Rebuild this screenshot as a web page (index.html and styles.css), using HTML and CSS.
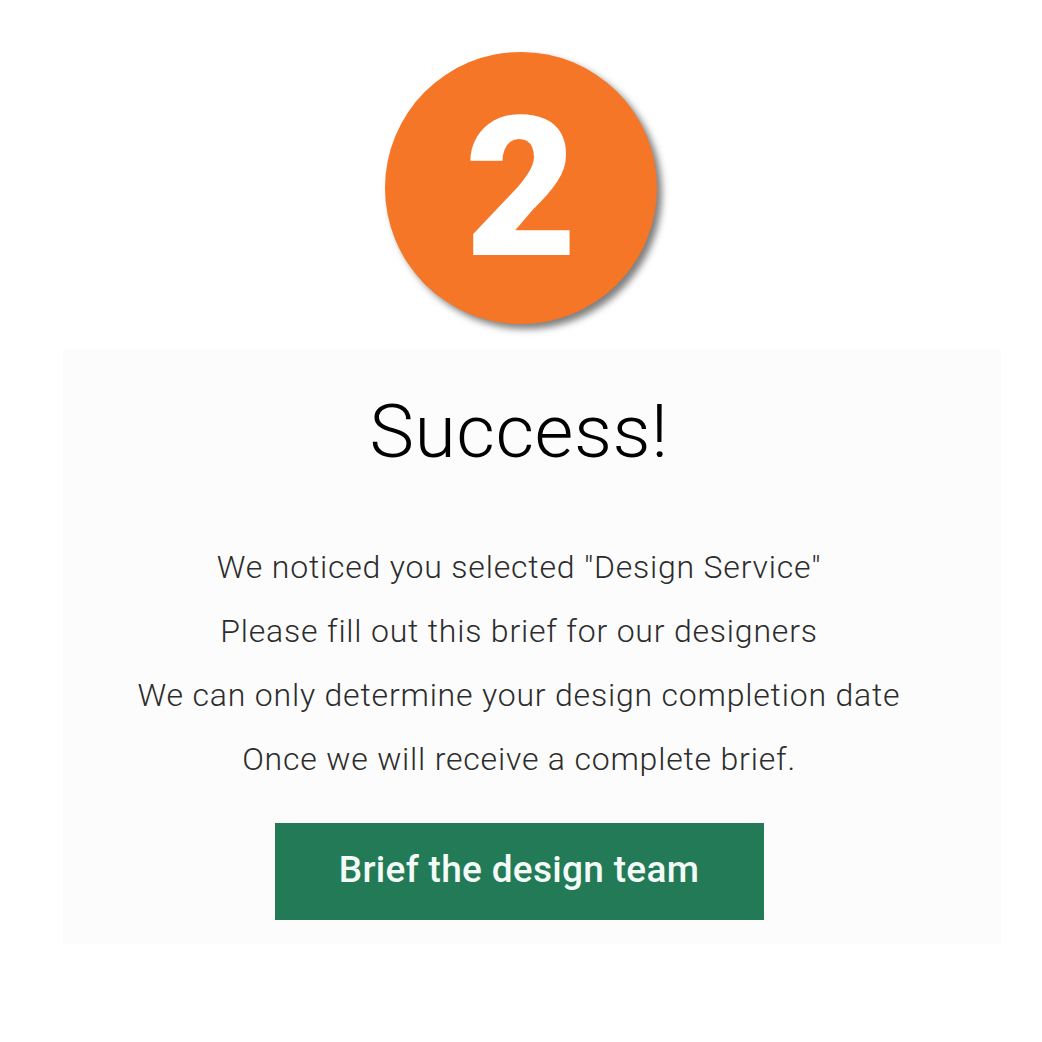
FILE: index.html
```html
<!DOCTYPE html>
<html>
<head>
<meta charset="utf-8">
<link rel="stylesheet" href="styles.css">
</head>
<body>
<div class="page">
  <div class="badge"><span class="num">2</span></div>
  <div class="panel">
    <h1 class="title">Success!</h1>
    <div class="lines">
      <p>We noticed you selected "Design Service"</p>
      <p>Please fill out this brief for our designers</p>
      <p>We can only determine your design completion date</p>
      <p>Once we will receive a complete brief.</p>
    </div>
    <a class="btn">Brief the design team</a>
  </div>
</div>
</body>
</html>
```
FILE: styles.css
```css
html, body {
  margin: 0;
  padding: 0;
  background: #ffffff;
}
body {
  width: 1042px;
  height: 1042px;
  font-family: Roboto, "Liberation Sans", sans-serif;
}
.page {
  display: flex;
  flex-direction: column;
  align-items: center;
  padding-top: 52px;
}
.badge {
  width: 272px;
  height: 272px;
  border-radius: 50%;
  background: #f47626;
  box-shadow: 5px 5px 7px rgba(0,0,0,0.5);
  display: flex;
  align-items: center;
  justify-content: center;
  position: relative;
  z-index: 1;
}
.num {
  color: #fff;
  font-family: Roboto, sans-serif;
  font-weight: 900;
  font-size: 194px;
  line-height: 1;
  margin-top: 2px;
}
.panel {
  margin-top: 26px;
  width: 938px;
  margin-left: 22px;
  height: 594px;
  background: #fcfcfc;
  display: flex;
  flex-direction: column;
  align-items: center;
  box-sizing: border-box;
  padding-top: 36px;
  padding-right: 26px;
}
.title {
  margin: 0;
  font-size: 75px;
  font-weight: 300;
  color: #000;
  line-height: 90px;
  letter-spacing: 0.5px;
}
.lines {
  margin-top: 59px;
  display: flex;
  flex-direction: column;
  align-items: center;
}
.lines p {
  margin: 0;
  font-size: 32px;
  line-height: 64px;
  color: #2c2c2c;
  font-weight: 300;
  letter-spacing: 0.8px;
}
.btn {
  margin-top: 32px;
  width: 489px;
  height: 97px;
  background: #237a57;
  color: #f4faf7;
  display: flex;
  align-items: center;
  justify-content: center;
  font-size: 37px;
  font-weight: 500;
  letter-spacing: 0.3px;
  padding-bottom: 4px;
  box-sizing: border-box;
}
```
